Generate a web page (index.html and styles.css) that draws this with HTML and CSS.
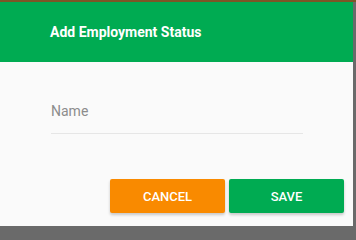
FILE: index.html
```html
<!DOCTYPE html>
<html>
<head>
<meta charset="utf-8">
<link rel="stylesheet" href="styles.css">
</head>
<body>
<div class="backdrop">
  <div class="dialog">
    <div class="dialog-header">
      <h2 class="dialog-title">Add Employment Status</h2>
    </div>
    <div class="dialog-body">
      <div class="field">
        <span class="field-label">Name</span>
      </div>
    </div>
    <div class="dialog-actions">
      <button class="btn btn-cancel">Cancel</button>
      <button class="btn btn-save">Save</button>
    </div>
  </div>
</div>
</body>
</html>
```

FILE: styles.css
```css
html, body {
  margin: 0;
  padding: 0;
  width: 356px;
  height: 229px;
  overflow: hidden;
  background: #6a6a6a;
  font-family: Roboto, "Liberation Sans", sans-serif;
}
.backdrop {
  border-top: 2px solid #7d5626;
  width: 356px;
  height: 227px;
}
.dialog {
  width: 353px;
  height: 224px;
  background: #fafafa;
  display: flex;
  flex-direction: column;
}
.dialog-header {
  height: 60px;
  background: #00ab52;
  display: flex;
  align-items: center;
  padding-left: 50px;
}
.dialog-title {
  margin: 0;
  color: #ffffff;
  font-size: 14px;
  font-weight: 700;
  letter-spacing: 0;
}
.dialog-body {
  padding: 40px 50px 0 51px;
}
.field {
  width: 252px;
  height: 31px;
  border-bottom: 1px solid #e6e6e6;
}
.field-label {
  display: block;
  color: #8c8c8c;
  font-size: 14px;
  line-height: 18px;
}
.dialog-actions {
  margin-top: auto;
  display: flex;
  justify-content: flex-end;
  gap: 4px;
  padding: 0 9px 13px 0;
}
.btn {
  width: 115px;
  height: 34px;
  border: none;
  border-radius: 2px;
  color: #ffffff;
  font-family: Roboto, "Liberation Sans", sans-serif;
  font-size: 13px;
  font-weight: 500;
  text-transform: uppercase;
  box-shadow: 0 2px 3px rgba(0,0,0,0.2);
  padding: 0;
}
.btn-cancel {
  background: #f98a00;
}
.btn-save {
  background: #00ab52;
}
```
